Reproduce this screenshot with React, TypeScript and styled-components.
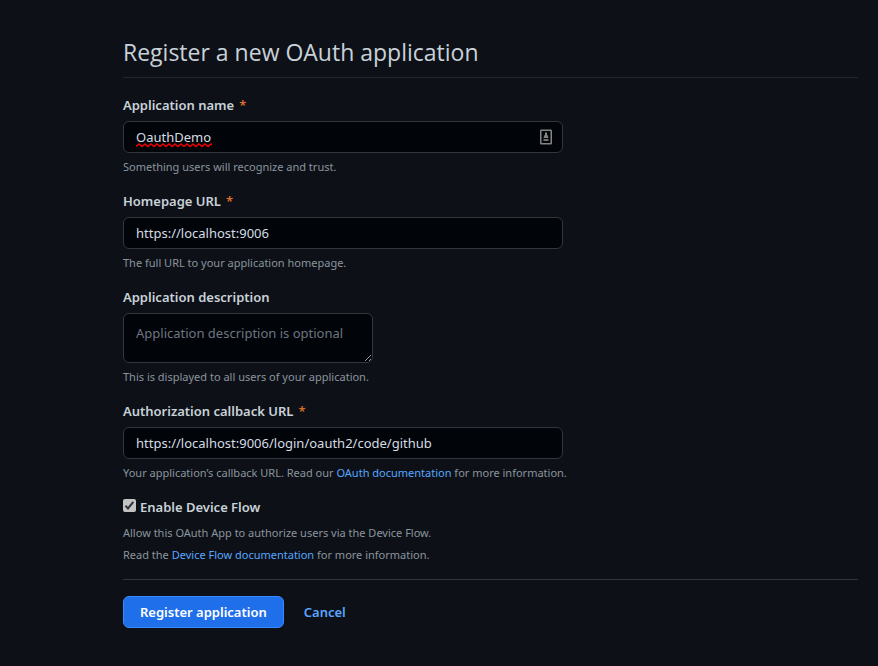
import React from "react";
import styled, { createGlobalStyle, css } from "styled-components";

const GlobalStyle = createGlobalStyle`
  *, *::before, *::after { box-sizing: border-box; }
  body {
    margin: 0;
    background: #0d1117;
    color: #c9d1d9;
    color-scheme: dark;
    font-family: "Noto Sans", "Open Sans", sans-serif;
    font-size: 13px;
    line-height: 21px;
  }
`;

const Page = styled.main`
  min-height: 100vh;
  padding: 34px 20px 32px 123px;
`;

const Title = styled.h1`
  margin: 0 0 17px;
  padding-bottom: 7px;
  border-bottom: 1px solid #21262d;
  font-family: "Open Sans", "Noto Sans", sans-serif;
  font-size: 23px;
  font-weight: 400;
  line-height: 36px;
`;

const Form = styled.form`
  display: flex;
  flex-direction: column;
  gap: 15px;
`;

const Field = styled.div`
  display: flex;
  flex-direction: column;
  align-items: flex-start;
`;

const Label = styled.label<{ $required?: boolean }>`
  margin-bottom: 5px;
  font-weight: 600;
  ${(p) =>
    p.$required &&
    css`
      &::after {
        content: "*";
        padding-left: 5px;
        color: #db6d28;
      }
    `}
`;

const controlStyles = css`
  border: 1px solid #30363d;
  border-radius: 6px;
  background: #010409;
  color: #d5dce3;
  font: inherit;
  outline: none;
  &::placeholder {
    color: #6e7681;
    opacity: 1;
  }
`;

const InputFrame = styled.div`
  display: grid;
  align-items: center;
  width: 440px;
  max-width: 100%;
  & > * {
    grid-area: 1 / 1;
  }
`;

const TextInput = styled.input`
  ${controlStyles}
  width: 100%;
  height: 32px;
  padding: 4px 12px;
`;

const SpellingMark = styled.svg`
  align-self: end;
  margin: 0 0 5px 13px;
  pointer-events: none;
`;

const ContactIcon = styled.svg`
  justify-self: end;
  margin-right: 11px;
`;

const TextArea = styled.textarea`
  ${controlStyles}
  display: block;
  width: 250px;
  height: 50px;
  padding: 9px 12px 7px;
  resize: both;
  overflow: hidden;
`;

const Note = styled.p<{ $loose?: boolean }>`
  margin: ${(p) => (p.$loose ? "0" : "5px 0 0")};
  color: #8b949e;
  font-size: 11px;
  line-height: ${(p) => (p.$loose ? "22px" : "18px")};
`;

const Link = styled.a`
  color: #58a6ff;
  text-decoration: none;
`;

const CheckLabel = styled.label`
  display: flex;
  align-items: center;
  gap: 4px;
  margin-bottom: 4px;
  font-weight: 600;
`;

const CheckFrame = styled.span`
  display: grid;
  margin-bottom: 4px;
  & > * {
    grid-area: 1 / 1;
  }
`;

const Checkbox = styled.input`
  appearance: none;
  width: 13px;
  height: 13px;
  margin: 0;
  border-radius: 2px;
  background: #c3c3c3;
  & + svg {
    visibility: hidden;
    pointer-events: none;
  }
  &:checked + svg {
    visibility: visible;
  }
`;

const Actions = styled.div`
  display: flex;
  align-items: center;
  gap: 20px;
  margin-top: -2px;
  padding-top: 16px;
  border-top: 1px solid #30363d;
`;

const SubmitButton = styled.button`
  height: 32px;
  padding: 0 16px;
  border: 1px solid #388bfd;
  border-radius: 6px;
  background: #1f6feb;
  color: #ffffff;
  font: inherit;
  font-weight: 600;
`;

const CancelLink = styled(Link)`
  font-weight: 600;
`;

const wavePath =
  "M0 3.5" + Array.from({ length: 13 }, (_, i) => `L${i * 6 + 3} 1L${i * 6 + 6} 3.5`).join("");

export default function App() {
  return (
    <>
      <GlobalStyle />
      <Page>
        <Title>Register a new OAuth application</Title>
        <Form onSubmit={(e) => e.preventDefault()}>
          <Field>
            <Label htmlFor="name" $required>Application name</Label>
            <InputFrame>
              <TextInput id="name" defaultValue="OauthDemo" spellCheck={false} />
              <SpellingMark width="76" height="5" viewBox="0 0 76 5" aria-hidden="true">
                <path d={wavePath} fill="none" stroke="#f00000" strokeWidth="1.5" />
              </SpellingMark>
              <ContactIcon width="12" height="16" viewBox="0 0 12 16" aria-hidden="true">
                <rect x="0.75" y="1.25" width="10.5" height="13.5" rx="0.5" fill="none" stroke="#858585" strokeWidth="1.5" />
                <rect x="5" y="3.5" width="2" height="2.5" fill="#858585" />
                <path d="M4.5 6h3l1 3h-5z" fill="#858585" />
                <rect x="3.5" y="10" width="5" height="2" fill="#707070" />
              </ContactIcon>
            </InputFrame>
            <Note>Something users will recognize and trust.</Note>
          </Field>

          <Field>
            <Label htmlFor="homepage" $required>Homepage URL</Label>
            <InputFrame>
              <TextInput id="homepage" defaultValue="https://localhost:9006" spellCheck={false} />
            </InputFrame>
            <Note>The full URL to your application homepage.</Note>
          </Field>

          <Field>
            <Label htmlFor="description">Application description</Label>
            <TextArea id="description" placeholder="Application description is optional" />
            <Note>This is displayed to all users of your application.</Note>
          </Field>

          <Field>
            <Label htmlFor="callback" $required>Authorization callback URL</Label>
            <InputFrame>
              <TextInput
                id="callback"
                defaultValue="https://localhost:9006/login/oauth2/code/github"
                spellCheck={false}
              />
            </InputFrame>
            <Note>
              Your application’s callback URL. Read our <Link href="#oauth">OAuth documentation</Link> for more
              information.
            </Note>
          </Field>

          <Field>
            <CheckLabel htmlFor="device-flow">
              <CheckFrame>
                <Checkbox id="device-flow" type="checkbox" defaultChecked />
                <svg width="13" height="13" viewBox="0 0 13 13" aria-hidden="true">
                  <path d="M2.5 6.8 5 9.4 10.3 2.8" fill="none" stroke="#30343a" strokeWidth="2" />
                </svg>
              </CheckFrame>
              Enable Device Flow
            </CheckLabel>
            <Note $loose>Allow this OAuth App to authorize users via the Device Flow.</Note>
            <Note $loose>
              Read the <Link href="#device-flow-docs">Device Flow documentation</Link> for more information.
            </Note>
          </Field>

          <Actions>
            <SubmitButton type="submit">Register application</SubmitButton>
            <CancelLink href="#cancel">Cancel</CancelLink>
          </Actions>
        </Form>
      </Page>
    </>
  );
}
